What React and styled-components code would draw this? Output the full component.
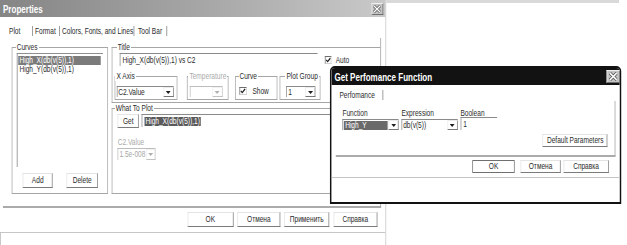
import React from "react";
import styled, { createGlobalStyle, css } from "styled-components";

// The screenshot is squeezed sideways: everything is laid out in
// reference pixels through sx() and the stage is scaled back by K.
const K = 0.73;
const sx = (v) => +(v / K).toFixed(2);

const GlobalStyle = createGlobalStyle`
  html, body {
    margin: 0;
    padding: 0;
    overflow: hidden;
    background: #fff;
  }
  body {
    font-family: "Liberation Sans", Arial, sans-serif;
    font-size: 9px;
    color: #2b2b2b;
  }
  * {
    box-sizing: border-box;
  }
`;

const Stage = styled.div`
  width: ${sx(627)}px;
  height: 245px;
  transform: scaleX(${K});
  transform-origin: 0 0;
`;

const Page = styled.div`
  position: relative;
  width: 100%;
  height: 100%;
  display: flex;
  overflow: hidden;
  background: #fff;
`;

const Desktop = styled.div`
  flex: 1;
`;

const DesktopEdge = styled.div`
  height: 3px;
  margin-right: ${sx(8)}px;
  background: #d9d9d9;
`;

const Window = styled.div`
  width: ${sx(386)}px;
  height: 245px;
  flex-shrink: 0;
  display: flex;
  flex-direction: column;
  border-right: 1px solid #c4c4c4;
`;

const TitleBar = styled.div`
  height: ${(p) => p.$h}px;
  flex-shrink: 0;
  display: flex;
  align-items: center;
  justify-content: space-between;
  padding: 0 ${(p) => sx(p.$pr)}px 0 ${sx(3)}px;
  background: ${(p) =>
    p.$dark ? "#121212" : "linear-gradient(to right, #858585, #a8a8a8 55%, #c9c9c9)"};
  color: #fff;
  font-weight: bold;
  font-size: 11px;
`;

const CloseBox = styled.div`
  width: ${(p) => sx(p.$size)}px;
  height: ${(p) => p.$size}px;
  display: flex;
  align-items: center;
  justify-content: center;
  background: #c3c3c3;
  border: 1px solid;
  border-color: #f0f0f0 #6f6f6f #6f6f6f #f0f0f0;
`;

const TabStrip = styled.div`
  height: ${(p) => p.$h}px;
  flex-shrink: 0;
  display: flex;
  align-items: flex-end;
  padding: 0 0 ${(p) => p.$pb}px ${(p) => sx(p.$pl)}px;
`;

const Tab = styled.div`
  width: ${(p) => sx(p.$w)}px;
  height: 10px;
  line-height: 10px;
  padding-left: ${(p) => sx(p.$pl)}px;
  border-right: 1px solid #7c7c7c;
  white-space: nowrap;
`;

const Panel = styled.div`
  margin-left: ${sx(3)}px;
  width: ${sx(378)}px;
  height: 170px;
  flex-shrink: 0;
  display: flex;
  gap: ${sx(4)}px;
  padding: 4px 0 0 ${sx(9)}px;
  border-right: 1px solid #9c9c9c;
  border-bottom: 2px solid #ababab;
`;

const Column = styled.div`
  display: flex;
  flex-direction: column;
`;

const Group = styled.fieldset`
  margin: 0 0 0 ${(p) => sx(p.$ml || 0)}px;
  padding: 0;
  min-width: 0;
  width: ${(p) => sx(p.$w)}px;
  height: ${(p) => p.$h}px;
  flex-shrink: 0;
  display: flex;
  flex-direction: column;
  border: 1px solid #a6a6a6;
  ${(p) =>
    p.$open &&
    css`
      border-right: none;
    `}
`;

const Legend = styled.legend`
  padding: 0 ${sx(1)}px;
  margin-left: ${(p) => sx(p.$lo)}px;
  height: 10px;
  line-height: 10px;
  white-space: nowrap;
  color: ${(p) => (p.$disabled ? "#ababab" : "#2b2b2b")};
`;

const GroupBody = styled.div`
  flex: 1;
  display: flex;
  flex-direction: column;
  padding-left: ${(p) => sx(p.$pl || 0)}px;
`;

const ListBox = styled.div`
  margin-top: 1px;
  width: ${sx(86)}px;
  height: 114px;
  padding: 2px ${sx(2)}px 0 ${sx(1)}px;
  border-top: 1px solid #8f8f8f;
  border-left: 1px solid #7f7f7f;
`;

const ListItem = styled.div`
  height: 9px;
  line-height: 9px;
  padding-left: ${sx(1)}px;
  white-space: nowrap;
  ${(p) =>
    p.$selected &&
    css`
      background: #7b7b7b;
      color: #fff;
    `}
`;

const Row = styled.div`
  display: flex;
  align-items: ${(p) => p.$align || "center"};
  justify-content: ${(p) => p.$justify || "flex-start"};
  margin-top: ${(p) => p.$mt || 0}px;
  margin-left: ${(p) => sx(p.$ml || 0)}px;
  gap: ${(p) => sx(p.$gap || 0)}px;
`;

const Button = styled.button`
  width: ${(p) => sx(p.$w)}px;
  height: ${(p) => p.$h || 15}px;
  margin: ${(p) => p.$mt || 0}px 0 0 ${(p) => sx(p.$ml || 0)}px;
  padding: 0;
  flex-shrink: 0;
  font: inherit;
  line-height: 1;
  color: #2b2b2b;
  background: #fff;
  white-space: nowrap;
  border: 1px solid;
  border-color: #e4e4e4 #7b7b7b #7b7b7b #e4e4e4;
  ${(p) =>
    p.$default &&
    css`
      border-color: #6f6f6f;
    `}
`;

const TextBox = styled.div`
  width: ${(p) => (p.$w ? `${sx(p.$w)}px` : "auto")};
  flex: ${(p) => (p.$w ? "none" : 1)};
  height: ${(p) => p.$h || 12}px;
  margin: ${(p) => p.$mt || 0}px 0 0 ${(p) => sx(p.$ml || 0)}px;
  padding: 1px 0 0 ${sx(2)}px;
  line-height: 10px;
  white-space: nowrap;
  overflow: hidden;
  background: #fff;
  border-top: 1px solid #8a8a8a;
  border-left: 1px solid #8a8a8a;
`;

const Highlight = styled.span`
  display: inline-block;
  padding: 0 ${sx(1)}px;
  line-height: 9px;
  color: #fff;
  background: ${(p) => p.$bg || "#5e5e5e"};
`;

const CheckLabel = styled.label`
  display: flex;
  align-items: center;
  gap: ${(p) => sx(p.$gap || 4)}px;
  margin: ${(p) => p.$mt || 0}px 0 0 ${(p) => sx(p.$ml || 0)}px;
  white-space: nowrap;
`;

const CheckBox = styled.span`
  width: ${sx(7)}px;
  height: 8px;
  display: flex;
  align-items: center;
  justify-content: center;
  background: #fff;
  border: 1px solid;
  border-color: #6d6d6d #d0d0d0 #d0d0d0 #6d6d6d;
`;

const SelectBox = styled.div`
  display: flex;
  width: ${(p) => sx(p.$w)}px;
  height: ${(p) => p.$h || 11}px;
  margin: ${(p) => p.$mt || 0}px 0 0 ${(p) => sx(p.$ml || 0)}px;
  flex-shrink: 0;
  background: #fff;
  border-top: 1px solid ${(p) => (p.$disabled ? "#bdbdbd" : "#8a8a8a")};
  border-left: 1px solid ${(p) => (p.$disabled ? "#bdbdbd" : "#8a8a8a")};
  color: ${(p) => (p.$disabled ? "#a8a8a8" : "#2b2b2b")};
`;

const SelectValue = styled.div`
  flex: 1;
  min-width: 0;
  padding: 0 ${sx(1)}px;
  line-height: 10px;
  white-space: nowrap;
  overflow: hidden;
  ${(p) =>
    p.$highlight &&
    css`
      background: #6a6a6a;
      color: #fff;
      margin: 1px ${sx(1)}px 0 ${sx(1)}px;
      line-height: 8px;
    `}
`;

const ArrowBox = styled.div`
  width: ${sx(10)}px;
  flex-shrink: 0;
  display: flex;
  align-items: center;
  justify-content: center;
  border: 1px solid;
  border-color: ${(p) =>
    p.$disabled ? "#f0f0f0 #c2c2c2 #c2c2c2 #f0f0f0" : "#ececec #767676 #767676 #ececec"};
`;

const FieldLabel = styled.div`
  height: 9px;
  line-height: 9px;
  margin-top: ${(p) => p.$mt || 0}px;
  color: ${(p) => (p.$disabled ? "#ababab" : "#2b2b2b")};
  white-space: nowrap;
`;

const Footer = styled.div`
  height: 24px;
  flex-shrink: 0;
  display: flex;
  justify-content: flex-end;
  gap: ${sx(4)}px;
  padding: 4px ${sx(8)}px 0 0;
`;

const StatusBar = styled.div`
  flex: 1;
  border-top: 1px solid #c6c6c6;
  border-left: 1px solid #b4b4b4;
`;

const Dialog = styled.div`
  position: absolute;
  left: ${sx(330)}px;
  top: 66px;
  width: ${sx(291)}px;
  height: 138px;
  display: flex;
  flex-direction: column;
  background: #fff;
  border: 2px solid #121212;
  border-left-width: ${sx(2)}px;
  border-right-width: ${sx(2)}px;
  border-radius: ${sx(5)}px ${sx(5)}px 0 0 / 5px 5px 0 0;
  overflow: hidden;
`;

const DialogPanel = styled.div`
  margin-left: ${sx(4)}px;
  width: ${sx(280)}px;
  height: 56px;
  flex-shrink: 0;
  display: flex;
  flex-direction: column;
  padding: 8px ${sx(7)}px 0 ${sx(7)}px;
  border-right: 1px solid #9c9c9c;
  border-bottom: 2px solid #ababab;
`;

const Field = styled.div`
  width: ${(p) => sx(p.$w)}px;
  margin-left: ${(p) => sx(p.$ml || 0)}px;
  display: flex;
  flex-direction: column;
  gap: 1px;
`;

const DialogButtons = styled.div`
  height: 17px;
  flex-shrink: 0;
  display: flex;
  justify-content: flex-end;
  padding: 3px ${sx(11)}px 0 0;
`;

const Separator = styled.div`
  margin-top: 3px;
  border-top: 1px solid #c4c4c4;
`;

function CloseIcon({ size }) {
  return (
    <svg width={sx(size)} height={size} viewBox="0 0 8 8" preserveAspectRatio="none">
      <path d="M1 1 L7 7 M7 1 L1 7" stroke="#4a4a4a" strokeWidth="2.6" />
      <path d="M1 1 L7 7 M7 1 L1 7" stroke="#fff" strokeWidth="1.3" />
    </svg>
  );
}

function Check({ checked }) {
  return (
    <CheckBox>
      {checked && (
        <svg width={sx(6)} height="6" viewBox="0 0 7 7" preserveAspectRatio="none">
          <path d="M0.8 3.4 L2.6 5.4 L6.2 1.2" fill="none" stroke="#1e1e1e" strokeWidth="1.5" />
        </svg>
      )}
    </CheckBox>
  );
}

function Select({ w, h, value, highlight, disabled, ml, mt }) {
  return (
    <SelectBox $w={w} $h={h} $ml={ml} $mt={mt} $disabled={disabled}>
      <SelectValue $highlight={highlight}>{value}</SelectValue>
      <ArrowBox $disabled={disabled}>
        <svg width={sx(5)} height="3" viewBox="0 0 5 3" preserveAspectRatio="none">
          <path d="M0 0 H5 L2.5 3 Z" fill={disabled ? "#b0b0b0" : "#1e1e1e"} />
        </svg>
      </ArrowBox>
    </SelectBox>
  );
}

function GroupBox({ label, disabled, lo = 3, pl, w, h, ml, open, children }) {
  return (
    <Group $w={w} $h={h} $ml={ml} $open={open}>
      <Legend $lo={lo} $disabled={disabled}>
        {label}
      </Legend>
      <GroupBody $pl={pl}>{children}</GroupBody>
    </Group>
  );
}

function PropertiesWindow() {
  return (
    <Window>
      <TitleBar $h={17} $pr={2}>
        <span>Properties</span>
        <CloseBox $size={12}>
          <CloseIcon size={8} />
        </CloseBox>
      </TitleBar>

      <TabStrip $h={21} $pb={2} $pl={6}>
        <Tab $w={27} $pl={3}>Plot</Tab>
        <Tab $w={27} $pl={2}>Format</Tab>
        <Tab $w={74} $pl={2}>Colors, Fonts, and Lines</Tab>
        <Tab $w={33} $pl={4}>Tool Bar</Tab>
      </TabStrip>

      <Panel>
        <GroupBox label="Curves" lo={3} w={96} h={152} pl={4}>
          <ListBox>
            <ListItem $selected>High_X(db(v(5)),1)</ListItem>
            <ListItem>High_Y(db(v(5)),1)</ListItem>
          </ListBox>
          <Row $mt={6} $ml={6} $gap={14}>
            <Button $w={30}>Add</Button>
            <Button $w={31}>Delete</Button>
          </Row>
        </GroupBox>

        <Column>
          <GroupBox label="Title" lo={4} w={268} h={61} pl={2} open>
            <Row $mt={1}>
              <TextBox $w={198} $h={13} $ml={5}>
                High_X(db(v(5)),1) vs C2
              </TextBox>
              <CheckLabel $ml={7}>
                <Check checked />
                Auto
              </CheckLabel>
            </Row>
            <Row $align="flex-start" $mt={5}>
              <GroupBox label="X Axis" lo={0} w={63} h={29} pl={1}>
                <Select w={57} value="C2.Value" mt={5} />
              </GroupBox>
              <GroupBox label="Temperature" disabled lo={1} w={42} h={29} pl={2} ml={9}>
                <Select w={33} value="" mt={5} disabled />
              </GroupBox>
              <GroupBox label="Curve" lo={3} w={43} h={29} pl={4} ml={6}>
                <CheckLabel $mt={5} $gap={6}>
                  <Check checked />
                  Show
                </CheckLabel>
              </GroupBox>
              <GroupBox label="Plot Group" lo={5} w={41} h={29} pl={6} ml={2}>
                <Select w={29} value="1" mt={5} />
              </GroupBox>
            </Row>
          </GroupBox>

          <GroupBox label="What To Plot" lo={2} w={268} h={91} pl={5} open>
            <Row $align="flex-start">
              <Button $w={21} $h={14} $mt={1}>
                Get
              </Button>
              <TextBox $h={13} $mt={1} $ml={3}>
                <Highlight $bg="#5a5a5a">High_X(db(v(5)),1)</Highlight>
              </TextBox>
            </Row>
            <FieldLabel $mt={10} $disabled>
              C2.Value
            </FieldLabel>
            <Select w={38} h={12} value="1.5e-008" mt={1} disabled />
          </GroupBox>
        </Column>
      </Panel>

      <Footer>
        <Button $w={46}>OK</Button>
        <Button $w={43}>Отмена</Button>
        <Button $w={45}>Применить</Button>
        <Button $w={44}>Справка</Button>
      </Footer>
      <StatusBar />
    </Window>
  );
}

function PerformanceDialog() {
  return (
    <Dialog>
      <TitleBar $h={17} $pr={0} $dark>
        <span>Get Perfomance Function</span>
        <CloseBox $size={13}>
          <CloseIcon size={9} />
        </CloseBox>
      </TitleBar>

      <TabStrip $h={16} $pb={1} $pl={6}>
        <Tab $w={46} $pl={2}>Perfomance</Tab>
      </TabStrip>

      <DialogPanel>
        <Row $align="flex-start">
          <Field $w={56}>
            <FieldLabel>Function</FieldLabel>
            <Select w={56} value="High_Y" highlight />
          </Field>
          <Field $w={56} $ml={3}>
            <FieldLabel>Expression</FieldLabel>
            <Select w={56} value="db(v(5))" />
          </Field>
          <Field $w={37} $ml={3}>
            <FieldLabel>Boolean</FieldLabel>
            <TextBox $w={37} $h={13} $mt={-2}>
              1
            </TextBox>
          </Field>
        </Row>
        <Row $justify="flex-end" $mt={4}>
          <Button $w={65} $h={13}>
            Default Parameters
          </Button>
        </Row>
      </DialogPanel>

      <DialogButtons>
        <Button $w={42} $h={13} $default>
          OK
        </Button>
        <Button $w={40} $h={13} $ml={6}>
          Отмена
        </Button>
        <Button $w={45} $h={13} $ml={3}>
          Справка
        </Button>
      </DialogButtons>
      <Separator />
    </Dialog>
  );
}

export default function App() {
  return (
    <Stage>
      <GlobalStyle />
      <Page>
        <PropertiesWindow />
        <Desktop>
          <DesktopEdge />
        </Desktop>
        <PerformanceDialog />
      </Page>
    </Stage>
  );
}
